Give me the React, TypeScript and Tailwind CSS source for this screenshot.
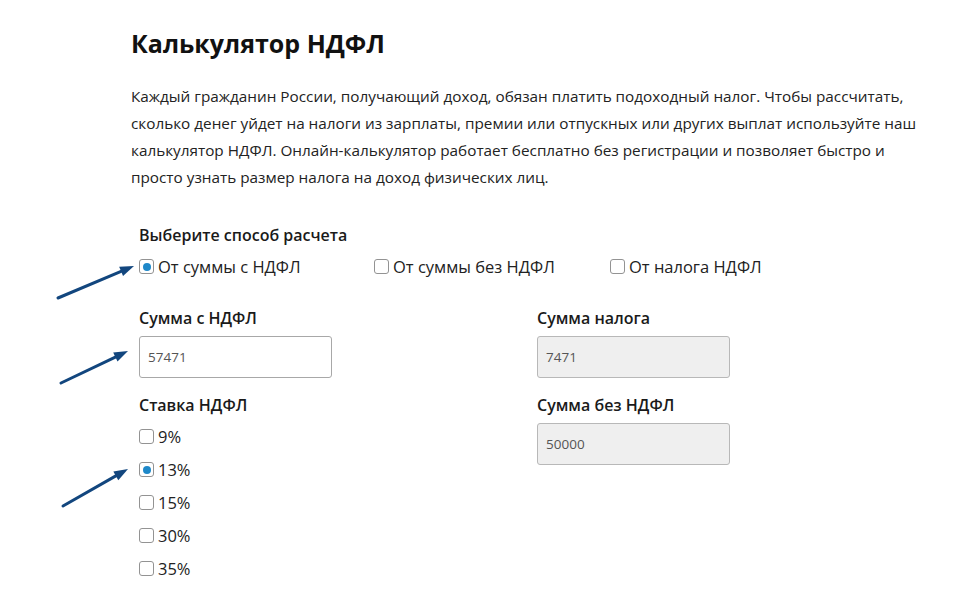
function Box({ checked }: { checked?: boolean }) {
  return (
    <span className="inline-flex h-[15px] w-[15px] shrink-0 items-center justify-center rounded-[3px] border border-[#939393] bg-white">
      {checked && <span className="h-[8px] w-[8px] rounded-full bg-[#1e88c9]" />}
    </span>
  );
}

function Option({ label, checked }: { label: string; checked?: boolean }) {
  return (
    <label className="flex items-center gap-[4px] text-[16.5px] leading-[23px] text-[#222]">
      <Box checked={checked} />
      <span>{label}</span>
    </label>
  );
}

function Field({ label, value, disabled }: { label: string; value: string; disabled?: boolean }) {
  return (
    <div className="flex flex-col">
      <div className="text-[16px] font-semibold text-[#1a1a1a] leading-[22px]">{label}</div>
      <div
        className={
          "mt-[7px] flex h-[42px] w-[193px] items-center rounded-[3px] border px-[8px] text-[13.5px] text-[#555] " +
          (disabled ? "border-[#b8b8b8] bg-[#efefef]" : "border-[#a8a8a8] bg-white")
        }
      >
        {value}
      </div>
    </div>
  );
}

function Arrow({ x1, y1, x2, y2 }: { x1: number; y1: number; x2: number; y2: number }) {
  const ang = Math.atan2(y2 - y1, x2 - x1);
  const len = 14;
  const w = 5;
  const bx = x2 - Math.cos(ang) * len;
  const by = y2 - Math.sin(ang) * len;
  const px = -Math.sin(ang) * w;
  const py = Math.cos(ang) * w;
  return (
    <g>
      <line x1={x1} y1={y1} x2={bx} y2={by} stroke="#12467e" strokeWidth={3} strokeLinecap="round" />
      <polygon points={`${x2},${y2} ${bx + px},${by + py} ${bx - px},${by - py}`} fill="#12467e" />
    </g>
  );
}

export default function App() {
  return (
    <div className="relative h-[590px] w-[960px] overflow-hidden bg-white font-['Open_Sans',sans-serif]">
      <div className="pl-[131px] pt-[25px]">
        <h1 className="text-[25px] font-bold leading-[36px] text-[#111]">Калькулятор НДФЛ</h1>
        <p className="mt-[22px] w-[795px] text-[15.3px] leading-[27px] text-[#222]">
          Каждый гражданин России, получающий доход, обязан платить подоходный налог. Чтобы рассчитать, сколько денег уйдет на налоги из зарплаты, премии или отпускных или других выплат используйте наш калькулятор НДФЛ. Онлайн-калькулятор работает бесплатно без регистрации и позволяет быстро и просто узнать размер налога на доход физических лиц.
        </p>
        <div className="ml-[8px] mt-[33px]">
          <div className="text-[16px] font-semibold leading-[22px] text-[#1a1a1a]">Выберите способ расчета</div>
          <div className="mt-[9px] flex items-center">
            <div className="w-[235px]"><Option label="От суммы с НДФЛ" checked /></div>
            <div className="w-[236px]"><Option label="От суммы без НДФЛ" /></div>
            <Option label="От налога НДФЛ" />
          </div>
          <div className="mt-[29px] grid grid-cols-[398px_1fr]">
            <div className="flex flex-col">
              <Field label="Сумма с НДФЛ" value="57471" />
              <div className="mt-[16px] text-[16px] font-semibold leading-[22px] text-[#1a1a1a]">Ставка НДФЛ</div>
              <div className="mt-[9px] flex flex-col gap-[10px]">
                <Option label="9%" />
                <Option label="13%" checked />
                <Option label="15%" />
                <Option label="30%" />
                <Option label="35%" />
              </div>
            </div>
            <div className="flex flex-col gap-[16px]">
              <Field label="Сумма налога" value="7471" disabled />
              <Field label="Сумма без НДФЛ" value="50000" disabled />
            </div>
          </div>
        </div>
      </div>
      <svg className="pointer-events-none absolute left-0 top-0" width={960} height={590}>
        <Arrow x1={58} y1={298} x2={134} y2={266} />
        <Arrow x1={61} y1={383} x2={128} y2={351} />
        <Arrow x1={63} y1={506} x2={128} y2={469} />
      </svg>
    </div>
  );
}
